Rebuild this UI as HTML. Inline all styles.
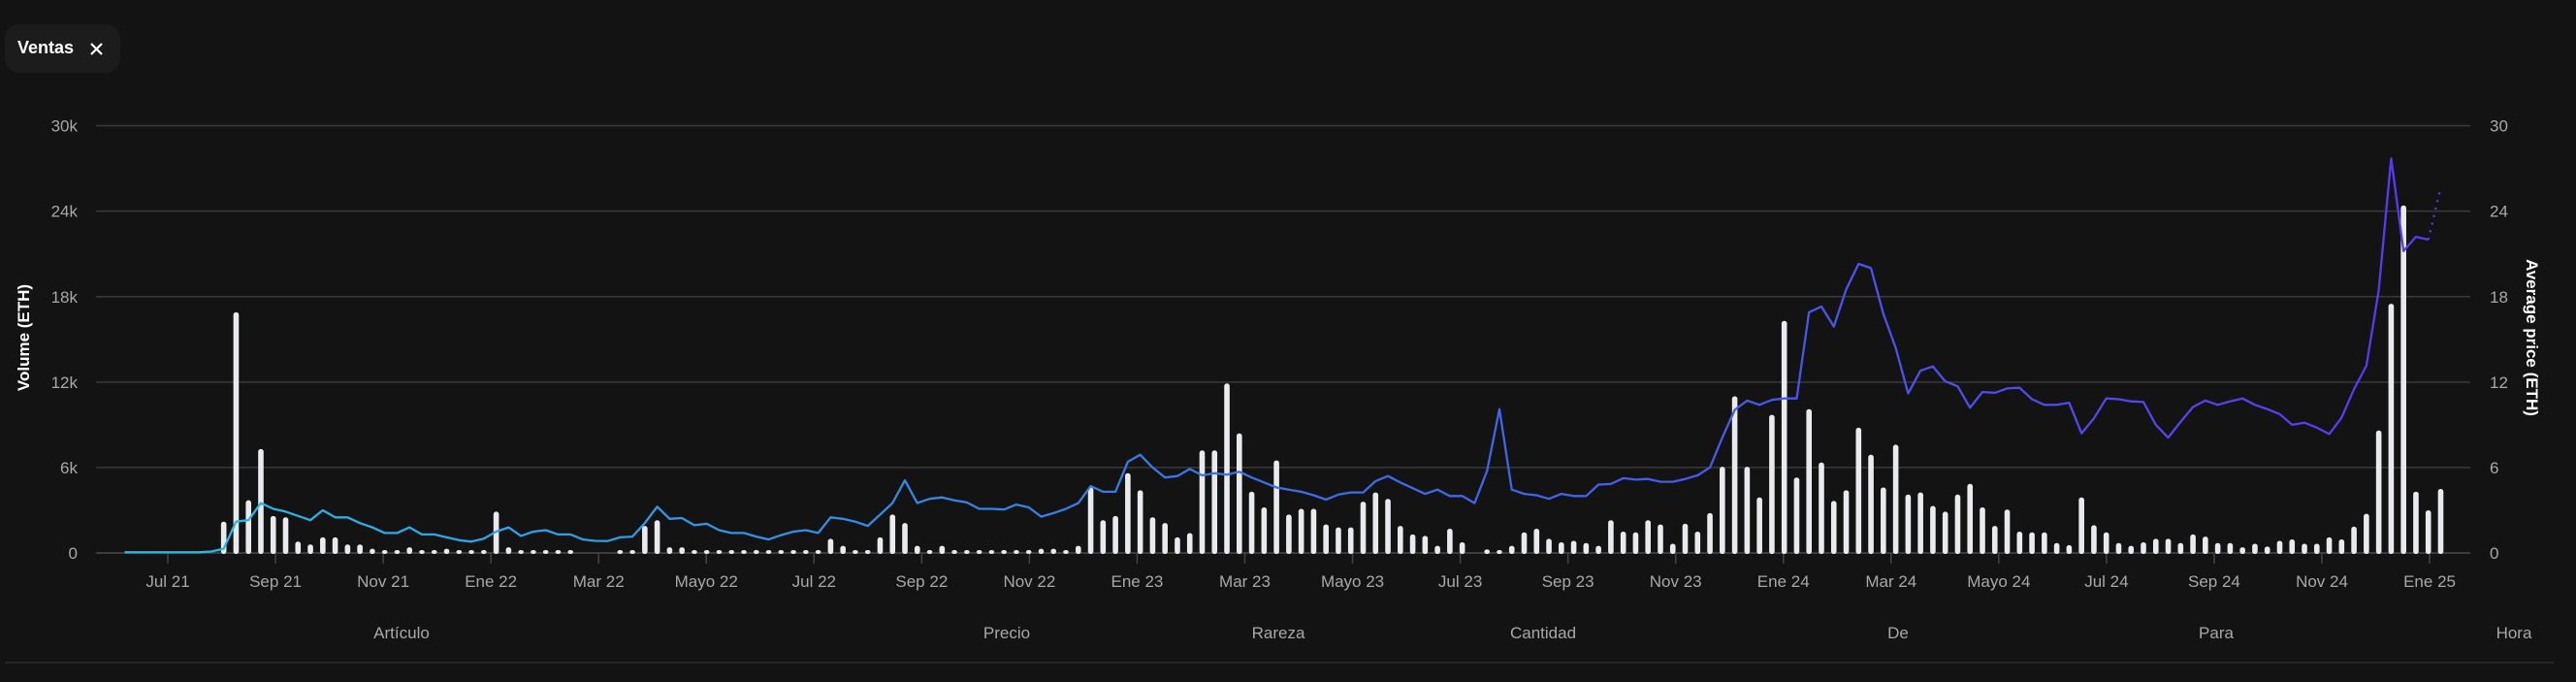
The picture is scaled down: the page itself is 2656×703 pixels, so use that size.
<!DOCTYPE html>
<html><head><meta charset="utf-8"><style>
html,body{margin:0;padding:0;background:#131313;width:2656px;height:703px;overflow:hidden;font-family:"Liberation Sans",sans-serif}
.pill{position:absolute;left:5px;top:25px;width:119px;height:50px;border-radius:15px;background:#1c1c1c}
.pill span{position:absolute;left:13px;top:14px;color:#fff;font-weight:bold;font-size:18px}
svg{position:absolute;left:0;top:0}
</style></head><body>
<div class="pill"><span>Ventas</span>
<svg width="16" height="16" style="left:87px;top:18px"><path d="M2 2L13 13M13 2L2 13" stroke="#fff" stroke-width="2.2"/></svg></div>
<svg id="c" width="2656" height="703" xmlns="http://www.w3.org/2000/svg"></svg>
<script>
var vol=[0,0,0,0,0,0,0,0,2.2,16.9,3.7,7.3,2.6,2.5,0.8,0.6,1.1,1.1,0.6,0.6,0.3,0.2,0.2,0.4,0.1,0.1,0.3,0.1,0.1,0.2,2.9,0.4,0.1,0.2,0.2,0.1,0.1,0,0,0,0.2,0.1,1.9,2.3,0.4,0.4,0.2,0.1,0.2,0.05,0.05,0.05,0.05,0.1,0.05,0.1,0.1,1.0,0.5,0.2,0.1,1.1,2.7,2.1,.5,.2,.5,.1,.1,.05,.1,.1,.1,.05,.3,.3,.2,.5,4.6,2.3,2.6,5.6,4.4,2.5,2.1,1.1,1.4,7.2,7.2,11.9,8.4,4.3,3.2,6.5,2.7,3.1,3.1,2.0,1.8,1.8,3.6,4.25,3.8,1.9,1.3,1.2,.5,1.7,.75,0,.25,.1,.5,1.45,1.7,1.0,.75,.85,.7,.5,2.3,1.5,1.45,2.3,2.0,.65,2.05,1.5,2.8,6.05,11.0,6.05,3.9,9.7,16.3,5.3,10.1,6.35,3.65,4.4,8.8,6.9,4.6,7.6,4.1,4.25,3.3,2.9,4.1,4.85,3.2,1.9,3.05,1.5,1.45,1.45,.7,.55,3.9,1.95,1.45,.7,.5,.75,1.0,1.0,.7,1.3,1.15,.7,.7,.4,.65,.45,.85,.95,.65,.65,1.1,.95,1.85,2.75,8.6,17.5,24.4,4.3,3.0,4.5];
var pr=[.05,.05,.05,.05,.05,.05,.05,.1,.3,2.2,2.3,3.5,3.1,2.9,2.6,2.3,3.0,2.5,2.5,2.1,1.8,1.4,1.4,1.8,1.3,1.3,1.1,.9,.8,1.0,1.5,1.8,1.2,1.5,1.6,1.3,1.3,.95,.85,.84,1.1,1.15,2.1,3.25,2.4,2.45,1.95,2.05,1.6,1.4,1.4,1.15,.95,1.25,1.5,1.6,1.4,2.5,2.4,2.2,1.9,2.7,3.5,5.1,3.5,3.8,3.9,3.7,3.55,3.1,3.1,3.05,3.4,3.2,2.55,2.8,3.1,3.5,4.7,4.3,4.3,6.4,6.9,6.0,5.3,5.4,5.9,5.45,5.6,5.5,5.7,5.3,4.95,4.6,4.45,4.3,4.05,3.75,4.1,4.25,4.25,5.05,5.4,4.95,4.55,4.15,4.45,4.0,4.0,3.5,5.75,10.1,4.45,4.15,4.05,3.8,4.15,4.0,4.0,4.8,4.85,5.25,5.15,5.2,5.0,5.0,5.2,5.45,6.0,8.1,10.05,10.7,10.4,10.75,10.85,10.85,16.9,17.3,15.9,18.5,20.3,20.0,16.8,14.4,11.2,12.8,13.1,12.05,11.7,10.2,11.3,11.25,11.55,11.6,10.8,10.4,10.4,10.55,8.4,9.45,10.85,10.8,10.65,10.6,9.0,8.1,9.2,10.25,10.7,10.4,10.65,10.85,10.4,10.1,9.75,9.0,9.15,8.8,8.35,9.5,11.5,13.15,18.45,27.7,21.2,22.2,22.0,25.65];
var Y0=570,K=14.68,X=function(i){return 128.5+12.77*i},Y=function(v){return Y0-v*K};
var s='<defs><linearGradient id="g" gradientUnits="userSpaceOnUse" x1="200" y1="0" x2="2450" y2="0"><stop offset="0" stop-color="#2ab8e6"/><stop offset="0.5" stop-color="#3a6fe6"/><stop offset="1" stop-color="#5a3af0"/></linearGradient></defs>';
var L=['30k','24k','18k','12k','6k','0'],R=['30','24','18','12','6','0'];
for(var k=0;k<6;k++){var y=Y(30-6*k);
s+='<line x1="99" x2="2547" y1="'+y+'" y2="'+y+'" stroke="'+(k==5?'#4a4a4a':'#3a3a3a')+'" stroke-width="1.5"/>';
s+='<text x="80" y="'+(y+6)+'" text-anchor="end" fill="#a8a8a8" font-size="17">'+L[k]+'</text>';
s+='<text x="2567" y="'+(y+6)+'" fill="#a8a8a8" font-size="17">'+R[k]+'</text>';}
var m=['Jul 21','Sep 21','Nov 21','Ene 22','Mar 22','Mayo 22','Jul 22','Sep 22','Nov 22','Ene 23','Mar 23','Mayo 23','Jul 23','Sep 23','Nov 23','Ene 24','Mar 24','Mayo 24','Jul 24','Sep 24','Nov 24','Ene 25'];
for(var j=0;j<m.length;j++){var x=173+111.05*j;
s+='<line x1="'+x+'" x2="'+x+'" y1="570" y2="581" stroke="#444" stroke-width="1.5"/>';
s+='<text x="'+x+'" y="605" text-anchor="middle" fill="#a8a8a8" font-size="17">'+m[j]+'</text>';}
for(var i=0;i<vol.length;i++){if(vol[i]<=0)continue;var h=vol[i]*K;if(h<3)h=3;
s+='<rect x="'+(X(i)-2.8)+'" y="'+(Y0-h)+'" width="5.6" height="'+(h+1)+'" rx="2.6" fill="#e8eaed"/>';}
var d='';for(i=0;i<pr.length-1;i++)d+=(i?'L':'M')+X(i).toFixed(1)+' '+Y(pr[i]).toFixed(1);
s+='<path d="'+d+'" fill="none" stroke="url(#g)" stroke-width="2.3" stroke-linejoin="round"/>';
var n=pr.length-1;
s+='<path d="M'+X(n-1)+' '+Y(pr[n-1])+'L'+X(n)+' '+Y(pr[n])+'" stroke="#5a3af0" stroke-width="2.3" stroke-dasharray="2 6" fill="none"/>';
s+='<text transform="translate(30,348) rotate(-90)" text-anchor="middle" fill="#fff" font-weight="bold" font-size="17">Volume (ETH)</text>';
s+='<text transform="translate(2605,348) rotate(90)" text-anchor="middle" fill="#fff" font-weight="bold" font-size="17">Average price (ETH)</text>';
var c=[['Artículo',414],['Precio',1038],['Rareza',1318],['Cantidad',1591],['De',1957],['Para',2285],['Hora',2592]];
for(j=0;j<c.length;j++)s+='<text x="'+c[j][1]+'" y="658" text-anchor="middle" fill="#a8a8a8" font-size="17">'+c[j][0]+'</text>';
s+='<line x1="5" x2="2633" y1="683" y2="683" stroke="#2e2e2e" stroke-width="1.5"/>';
document.getElementById('c').innerHTML=s;
</script>
</body></html>
